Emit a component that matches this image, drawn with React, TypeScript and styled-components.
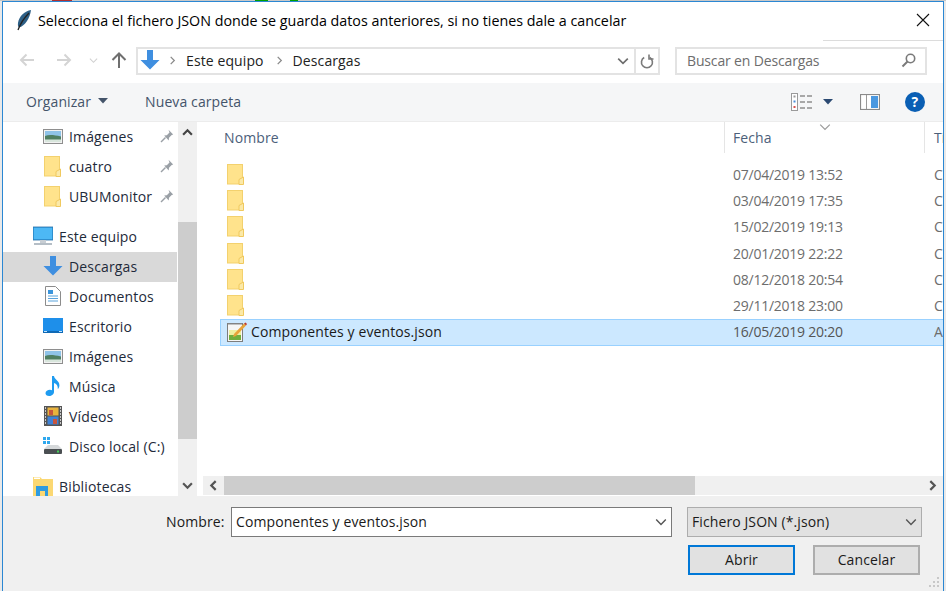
import React from "react";
import styled, { createGlobalStyle } from "styled-components";

const Global = createGlobalStyle`
  html, body { margin: 0; padding: 0; }
  body {
    width: 946px; height: 591px; overflow: hidden; background: #e9e9e9;
    font-family: "Open Sans", "Noto Sans", "Liberation Sans", sans-serif;
    font-size: 14px; color: #1a1a1a; letter-spacing: 0.1px;
  }
  * { box-sizing: border-box; }
`;

const TopStrip = styled.div`
  height: 1px;
  background: linear-gradient(90deg, #c8c8c8 0 52px, #b03030 52px 72px, #c8c8c8 72px 255px, #00a000 255px 268px, #c8c8c8 268px 290px, #00a000 290px 298px, #c8c8c8 298px 946px);
`;
const Win = styled.div`
  margin-left: 2px; width: 942px; height: 590px;
  border: 1px solid #2b87d3; border-width: 1px 1px 0 1px;
  background: #fff; display: flex; flex-direction: column; overflow: hidden;
`;
const TitleBar = styled.div`
  position: relative; height: 38px; flex: none; display: flex; align-items: center; padding: 0 0 2px 13px; gap: 6px; color: #000; font-size: 14.3px; letter-spacing: 0;
  &::after { content: ""; position: absolute; right: 0; bottom: -1px; width: 120px; height: 1px; background: #dcdcdc; }
`;
const Close = styled.span`
  margin-left: auto; margin-right: 13px; display: flex;
`;
const NavBar = styled.div`
  height: 43px; flex: none; display: flex; align-items: flex-start; padding: 7px 0 0 13px;
`;
const NavBtn = styled.span<{ $w: number; $ml?: number }>`
  width: ${p => p.$w}px; height: 26px; margin-left: ${p => p.$ml ?? 0}px; display: flex; align-items: center; justify-content: center;
`;
const AddressBox = styled.div`
  width: 524px; height: 28px; margin-left: 5px; border: 2px solid #e3e3e3; display: flex; align-items: center; color: #222; padding: 0 0 2px 2px;
`;
const Crumb = styled.span`
  display: inline-flex; align-items: center; margin-left: 8px; gap: 9px;
  & + & { margin-left: 11px; }
`;
const AddressEnd = styled.span`
  margin-left: auto; display: flex; align-items: center; height: 26px; margin-bottom: -2px;
`;
const RefreshCell = styled.span`
  width: 24px; height: 100%; border-left: 2px solid #e3e3e3; display: flex; align-items: center; justify-content: center; margin-left: 5px;
`;
const SearchBox = styled.div`
  width: 252px; height: 28px; margin-left: 15px; border: 2px solid #e3e3e3; display: flex; align-items: center; padding: 0 9px 2px 10px; color: #6d6d6d; letter-spacing: -0.15px;
  justify-content: space-between;
`;
const CommandBar = styled.div`
  height: 39px; flex: none; background: #f5f6f7; border-bottom: 1px solid #ececec; display: flex; align-items: center; padding-left: 23px; color: #44546a;
`;
const CmdItem = styled.span`
  display: inline-flex; align-items: center; gap: 7px; margin-right: 37px; padding-bottom: 2px;
`;
const CmdRight = styled.span`
  margin-left: auto; display: flex; align-items: center; margin-right: 18px; gap: 0;
`;
const CmdGap = styled.span<{ $w: number }>`
  width: ${p => p.$w}px; flex: none;
`;
const Main = styled.div`
  height: 374px; flex: none; display: flex; overflow: hidden;
`;
const Tree = styled.div`
  width: 175px; flex: none; display: flex; flex-direction: column; overflow: hidden; letter-spacing: 0.15px;
`;
const TreeItem = styled.div<{ $level: number; $active?: boolean; $gap?: boolean }>`
  height: 30px; flex: none; display: flex; align-items: center; padding: 0 0 2px ${p => (p.$level ? 40 : 30)}px;
  margin-right: 1px;
  margin-top: ${p => (p.$gap ? 10 : 0)}px; background: ${p => (p.$active ? "#d9d9d9" : "transparent")}; color: #1e2a3a;
`;
const TreeIcon = styled.span`
  width: 20px; height: 20px; flex: none; display: flex; align-items: center; justify-content: center; margin-right: 6px;
`;
const Pin = styled.span`
  margin-left: auto; margin-right: 3px; display: flex;
`;
const VScroll = styled.div`
  width: 19px; flex: none; background: #f0f0f0; display: flex; flex-direction: column;
`;
const Arrow = styled.span<{ $h: number; $w: number }>`
  height: ${p => p.$h}px; width: ${p => p.$w}px; flex: none; display: flex; align-items: center; justify-content: center;
`;
const VThumb = styled.div`
  width: 19px; height: 217px; margin-top: 79px; background: #cdcdcd; flex: none;
`;
const VEnd = styled.div`
  margin-top: auto; flex: none; height: 21px;
`;
const Gutter = styled.div`
  width: 6px; flex: none;
`;
const List = styled.div`
  flex: 1; min-width: 0; display: flex; flex-direction: column; position: relative;
`;
const Header = styled.div`
  height: 31px; flex: none; display: flex; color: #4c607a;
`;
const HCol = styled.div<{ $w?: number; $pad: number; $rule?: boolean }>`
  width: ${p => (p.$w ? `${p.$w}px` : "auto")}; flex: ${p => (p.$w ? "none" : 1)}; padding-left: ${p => p.$pad}px; line-height: 32px;
  border-right: ${p => (p.$rule ? "1px solid #e5e5e5" : "none")};
  overflow: hidden; white-space: nowrap;
`;
const Sort = styled.span`
  position: absolute; left: 616px; top: -1px; display: flex;
`;
const Rows = styled.div`
  flex: 1; padding-top: 8px; overflow: hidden;
`;
const Row = styled.div<{ $sel?: boolean }>`
  height: ${p => (p.$sel ? "27px" : "26.33px")}; display: flex; align-items: center; margin-left: 17px;
  padding-bottom: ${p => (p.$sel ? 1 : 0)}px;
  background: ${p => (p.$sel ? "#cce8ff" : "transparent")};
  border: 1px solid ${p => (p.$sel ? "#99d1ff" : "transparent")};
  border-right: none; white-space: nowrap;
`;
const RowName = styled.div`
  width: 512px; flex: none; display: flex; align-items: center; padding-left: 6px; gap: 4px; color: #1a1a1a;
`;
const RowDate = styled.div<{ $sel?: boolean }>`
  width: 201px; flex: none; letter-spacing: -0.25px; color: ${p => (p.$sel ? "#555" : "#6d6d6d")};
`;
const RowType = styled.div`
  flex: 1; overflow: hidden; color: #6d6d6d;
`;
const HScroll = styled.div`
  height: 19px; flex: none; margin-bottom: 1px; background: #f0f0f0; display: flex; align-items: center; justify-content: space-between;
`;
const HThumb = styled.div`
  width: 471px; height: 19px; background: #cdcdcd; margin-right: auto;
`;
const Footer = styled.div`
  flex: 1; background: #f0f0f0; padding-top: 11px; position: relative;
`;
const FieldRow = styled.div`
  display: flex; align-items: center; padding-left: 163px; color: #1a1a1a;
`;
const Label = styled.span`
  width: 65px; flex: none; padding-bottom: 2px;
`;
const Input = styled.div`
  width: 441px; height: 30px; flex: none; background: #fff; border: 1px solid #7a7a7a; display: flex; align-items: center; justify-content: space-between; padding: 0 4px 1px; color: #1a1a1a;
`;
const TypeSelect = styled.div`
  width: 235px; height: 30px; flex: none; margin-left: 15px; background: #e1e1e1; border: 1px solid #adadad; display: flex; align-items: center; justify-content: space-between; padding: 0 4px 1px; color: #1a1a1a;
`;
const ButtonRow = styled.div`
  display: flex; gap: 18px; padding: 8px 0 0 685px;
`;
const Btn = styled.div<{ $primary?: boolean }>`
  width: 107px; height: 30px; background: #e1e1e1; border: 2px solid ${p => (p.$primary ? "#0078d7" : "#adadad")};
  display: flex; align-items: center; justify-content: center; color: #1a1a1a; padding-bottom: 2px;
`;
const Grip = styled.span`
  position: absolute; right: 3px; bottom: 3px; display: flex;
`;

const Folder = () => (
  <svg width="18" height="21" viewBox="0 0 18 21">
    <rect x="0.5" y="0.5" width="15" height="19.500" fill="#ffe38c" stroke="#f3d16e" />
    <path d="M16.500 13v7.500h-4.500v-5z" fill="#fbe9a8" stroke="#f0c95e" />
  </svg>
);
const ImgIcon = () => (
  <svg width="20" height="15" viewBox="0 0 20 15">
    <rect x="0.5" y="0.5" width="19" height="14" fill="#f2f2f2" stroke="#8e8e8e" />
    <rect x="2" y="2" width="16" height="11" fill="#8fc3e8" />
    <path d="M2 7c4-1.500 9-1 16 .5V11H2z" fill="#4f7f62" />
    <rect x="2" y="10.500" width="16" height="2.500" fill="#d8e6dc" />
  </svg>
);
const PinIcon = () => (
  <svg width="14" height="14" viewBox="0 0 14 14">
    <path d="M8.5 0.8l4.700 4.700-1.500.6-2.700 2.700-.3 2.600L4.200 6.500l2.600-.3 2.700-2.700z" fill="#9aa0a6" />
    <path d="M5.5 8.500L1 13" stroke="#9aa0a6" strokeWidth="1.500" />
  </svg>
);
const DownArrow = () => (
  <svg width="20" height="20" viewBox="0 0 20 20">
    <path d="M7 0h6v10h6.500L10 19.500.5 10H7z" fill="#3f8fe0" />
  </svg>
);
const PcIcon = () => (
  <svg width="20" height="20" viewBox="0 0 20 20">
    <rect x="0" y="1" width="20" height="13" fill="#35a5ec" stroke="#2a6fa5" strokeWidth="0.800" />
    <rect x="1" y="2" width="18" height="11" fill="#4db8f5" />
    <rect x="7" y="14" width="6" height="3" fill="#c8ced4" />
    <rect x="1" y="17" width="18" height="2" fill="#b5bec6" />
  </svg>
);
const DocIcon = () => (
  <svg width="16" height="20" viewBox="0 0 16 20">
    <path d="M.5.500h10l5 5v14H.5z" fill="#fff" stroke="#8c8c8c" />
    <rect x="3" y="4" width="5" height="4" fill="#3b95dc" />
    <path d="M3 10h10M3 12.500h10M3 15h10" stroke="#5aa4dc" strokeWidth="1.200" />
  </svg>
);
const DesktopIcon = () => (
  <svg width="20" height="16" viewBox="0 0 20 16">
    <rect width="20" height="15" fill="#1e8fea" />
    <rect y="13" width="20" height="2" fill="#0f69b5" />
    <rect x="1" y="13" width="3" height="1" fill="#bfe3ff" />
    <rect x="16" y="13" width="3" height="1" fill="#bfe3ff" />
  </svg>
);
const MusicIcon = () => (
  <svg width="16" height="20" viewBox="0 0 16 20">
    <path d="M7 0h2c.3 3.400 5.400 4.600 5.400 9.200 0 1.700-.6 3-1.600 3.900.4-3.400-1.400-5.500-3.800-6.200V16c0 2.300-2.300 4-4.800 4C1.800 20 .5 18.900.5 17.300c0-2 2.200-3.500 4.500-3.500.8 0 1.500.2 2 .5z" fill="#1e9bf0" />
  </svg>
);
const VideoIcon = () => (
  <svg width="18" height="20" viewBox="0 0 18 20">
    <rect width="18" height="20" fill="#555" />
    <rect x="3.500" y="1.500" width="11" height="8" fill="#e8b33e" />
    <rect x="3.500" y="10.500" width="11" height="8" fill="#3f82d6" />
    <rect x="5" y="4" width="4" height="5" fill="#c8553d" />
    <rect x="9" y="13" width="4" height="5" fill="#c8553d" />
    <path d="M1 2h1M1 5h1M1 8h1M1 11h1M1 14h1M1 17h1M16 2h1M16 5h1M16 8h1M16 11h1M16 14h1M16 17h1" stroke="#eee" strokeWidth="1.400" />
  </svg>
);
const DiskIcon = () => (
  <svg width="20" height="18" viewBox="0 0 20 18">
    <rect x="0" y="0" width="3" height="3" fill="#2fa8ee" />
    <rect x="4" y="0" width="3" height="3" fill="#2fa8ee" />
    <rect x="0" y="4" width="3" height="3" fill="#2fa8ee" />
    <rect x="4" y="4" width="3" height="3" fill="#2fa8ee" />
    <path d="M5 8h10l4 4H1z" fill="#d5d8da" />
    <rect x="1" y="12" width="18" height="5" rx="1" fill="#4a4f52" />
    <rect x="14" y="13.500" width="2" height="2" fill="#46d05a" />
  </svg>
);
const LibIcon = () => (
  <svg width="20" height="20" viewBox="0 0 20 20">
    <path d="M0 1h7l2 2h11v17H0z" fill="#fbd873" />
    <rect x="1" y="1.500" width="6" height="1.500" fill="#fff" />
    <path d="M3 10h12v10h-3v-5H7v5H3z" fill="#2f9be0" />
  </svg>
);
const NoteIcon = () => (
  <svg width="20" height="20" viewBox="0 0 20 20">
    <rect x="0.500" y="1.500" width="15" height="18" fill="#f6f6f6" stroke="#7d7d7d" />
    <path d="M2 1v2M4 1v2M6 1v2M8 1v2M10 1v2M12 1v2M14 1v2" stroke="#8a8a8a" />
    <rect x="2" y="8" width="12" height="5" fill="#eef0a0" />
    <rect x="2" y="13" width="12" height="5" fill="#6fae3c" />
    <path d="M6 15l1-3L17 1.500l2 2L9 14z" fill="#e8a33a" />
    <path d="M17 1.500l2 2 1-1.500-1.500-1.500z" fill="#c0392b" />
  </svg>
);
const Chevron = ({ dir = "down", c = "#6e6e6e", s = 10, w = 1.2 }: { dir?: "down" | "up" | "left" | "right"; c?: string; s?: number; w?: number }) => {
  const d = { down: "M1 3l4 4 4-4", up: "M1 7l4-4 4 4", left: "M7 1L3 5l4 4", right: "M3 1l4 4-4 4" }[dir];
  return (
    <svg width={s} height={s} viewBox="0 0 10 10"><path d={d} fill="none" stroke={c} strokeWidth={w} /></svg>
  );
};
const Caret = ({ c }: { c: string }) => (
  <svg width="10" height="6" viewBox="0 0 10 6"><path d="M0 0h10L5 5.500z" fill={c} /></svg>
);
const NavArrow = ({ c, flip, w = 2 }: { c: string; flip?: boolean; w?: number }) => (
  <svg width="16" height="14" viewBox="0 0 16 14" style={flip ? { transform: "scaleX(-1)" } : undefined}>
    <path d="M15 7H2M7.500 1.500L2 7l5.500 5.500" fill="none" stroke={c} strokeWidth={w} />
  </svg>
);

const tree = [
  { t: "Imágenes", l: 1, i: <ImgIcon />, pin: true },
  { t: "cuatro", l: 1, i: <Folder />, pin: true },
  { t: "UBUMonitor", l: 1, i: <Folder />, pin: true },
  { t: "Este equipo", l: 0, i: <PcIcon />, gap: true },
  { t: "Descargas", l: 1, i: <DownArrow />, active: true },
  { t: "Documentos", l: 1, i: <DocIcon /> },
  { t: "Escritorio", l: 1, i: <DesktopIcon /> },
  { t: "Imágenes", l: 1, i: <ImgIcon /> },
  { t: "Música", l: 1, i: <MusicIcon /> },
  { t: "Vídeos", l: 1, i: <VideoIcon /> },
  { t: "Disco local (C:)", l: 1, i: <DiskIcon /> },
  { t: "Bibliotecas", l: 0, i: <LibIcon />, gap: true },
];
const dates = ["07/04/2019 13:52", "03/04/2019 17:35", "15/02/2019 19:13", "20/01/2019 22:22", "08/12/2018 20:54", "29/11/2018 23:00"];

export default function App() {
  return (
    <>
      <Global />
      <TopStrip />
      <Win>
        <TitleBar>
          <svg width="16" height="21" viewBox="0 0 16 21">
            <path d="M15 0C9 1 3 6 2 13c-.3 2 0 3.500 1 4.500C9 16 14 8 15 0z" fill="#2d5f86" />
            <path d="M13 3C9 7 5 12 2 20" stroke="#222" strokeWidth="1.300" fill="none" />
          </svg>
          Selecciona el fichero JSON donde se guarda datos anteriores, si no tienes dale a cancelar
          <Close>
            <svg width="14" height="14" viewBox="0 0 14 14"><path d="M1 1l12 12M13 1L1 13" stroke="#111" strokeWidth="1.100" /></svg>
          </Close>
        </TitleBar>
        <NavBar>
          <NavBtn $w={22}><NavArrow c="#d4d4d4" /></NavBtn>
          <NavBtn $w={30} $ml={11}><NavArrow c="#d4d4d4" flip /></NavBtn>
          <NavBtn $w={28}><Chevron c="#d0d0d0" s={9} /></NavBtn>
          <NavBtn $w={24}>
            <svg width="16" height="17" viewBox="0 0 16 17"><path d="M8 16V2M1.500 8L8 1.500 14.500 8" fill="none" stroke="#6f6f6f" strokeWidth="2" /></svg>
          </NavBtn>
          <AddressBox>
            <DownArrow />
            <Crumb><Chevron dir="right" c="#8a8a8a" s={9} w={1.400} />Este equipo</Crumb>
            <Crumb><Chevron dir="right" c="#8a8a8a" s={9} w={1.400} />Descargas</Crumb>
            <AddressEnd>
              <Chevron c="#6e6e6e" s={12} w={1.400} />
              <RefreshCell>
                <svg width="14" height="15" viewBox="0 0 14 15">
                  <path d="M4.200 3.500a5.500 5.500 0 1 0 5.500 0" fill="none" stroke="#7a7a7a" strokeWidth="1.600" />
                  <path d="M9 .5v4.500h4.500" fill="none" stroke="#7a7a7a" strokeWidth="1.600" />
                </svg>
              </RefreshCell>
            </AddressEnd>
          </AddressBox>
          <SearchBox>
            Buscar en Descargas
            <svg width="15" height="15" viewBox="0 0 15 15">
              <circle cx="9.500" cy="5.500" r="4.200" fill="none" stroke="#7a7a7a" strokeWidth="1.600" />
              <path d="M6.500 8.500L1.500 13.500" stroke="#7a7a7a" strokeWidth="2" />
            </svg>
          </SearchBox>
        </NavBar>
        <CommandBar>
          <CmdItem>Organizar <Caret c="#44546a" /></CmdItem>
          <CmdItem>Nueva carpeta</CmdItem>
          <CmdRight>
            <svg width="21" height="18" viewBox="0 0 21 18">
              <rect x="0.500" y="0.500" width="6" height="17" fill="#fff" stroke="#9a9a9a" />
              <rect x="2.500" y="2.500" width="2" height="2" fill="#999" />
              <rect x="2.500" y="7.500" width="2" height="2" fill="#4a90d9" />
              <rect x="2.500" y="13" width="2" height="2" fill="#d9534f" />
              <path d="M9 3h5M16 3h5M9 9h5M16 9h5M9 15h5M16 15h5" stroke="#8f8f8f" strokeWidth="1.300" />
            </svg>
            <CmdGap $w={11} />
            <Caret c="#2b4a72" />
            <CmdGap $w={27} />
            <svg width="20" height="16" viewBox="0 0 20 16">
              <rect x="0.500" y="0.500" width="19" height="15" fill="#fff" stroke="#8a8a8a" strokeWidth="1.200" />
              <rect x="11" y="2" width="7" height="12" fill="#4a98e0" />
              <rect x="6" y="1" width="1" height="14" fill="#9a9a9a" />
            </svg>
            <CmdGap $w={25} />
            <svg width="20" height="20" viewBox="0 0 20 20">
              <circle cx="10" cy="10" r="10" fill="#0a5fb4" />
              <text x="10" y="15" textAnchor="middle" fontSize="14" fontWeight="700" fill="#fff" fontFamily="Open Sans, sans-serif">?</text>
            </svg>
          </CmdRight>
        </CommandBar>
        <Main>
          <Tree>
            {tree.map((it, i) => (
              <TreeItem key={i} $level={it.l} $active={it.active} $gap={it.gap}>
                <TreeIcon>{it.i}</TreeIcon>
                {it.t}
                {it.pin && <Pin><PinIcon /></Pin>}
              </TreeItem>
            ))}
          </Tree>
          <VScroll>
            <Arrow $h={21} $w={19}><Chevron dir="up" c="#444" s={11} w={2} /></Arrow>
            <VThumb />
            <VEnd><Arrow $h={21} $w={19}><Chevron c="#555" s={11} w={2} /></Arrow></VEnd>
          </VScroll>
          <Gutter />
          <List>
            <Header>
              <HCol $w={522} $pad={21} $rule>Nombre</HCol>
              <HCol $w={200} $pad={8} $rule>Fecha</HCol>
              <HCol $pad={9}>Tipo</HCol>
              <Sort><Chevron c="#9a9a9a" s={12} w={1} /></Sort>
            </Header>
            <Rows>
              {dates.map(d => (
                <Row key={d}>
                  <RowName><Folder /></RowName>
                  <RowDate>{d}</RowDate>
                  <RowType>Carpeta de archivos</RowType>
                </Row>
              ))}
              <Row $sel>
                <RowName><NoteIcon />Componentes y eventos.json</RowName>
                <RowDate $sel>16/05/2019 20:20</RowDate>
                <RowType>Archivo JSON</RowType>
              </Row>
            </Rows>
            <HScroll>
              <Arrow $h={19} $w={21}><Chevron dir="left" c="#555" s={11} w={2} /></Arrow>
              <HThumb />
              <Arrow $h={19} $w={21}><Chevron dir="right" c="#555" s={11} w={2} /></Arrow>
            </HScroll>
          </List>
        </Main>
        <Footer>
          <FieldRow>
            <Label>Nombre:</Label>
            <Input>Componentes y eventos.json<Chevron c="#555" s={12} /></Input>
            <TypeSelect>Fichero JSON (*.json)<Chevron c="#555" s={12} /></TypeSelect>
          </FieldRow>
          <ButtonRow>
            <Btn $primary>Abrir</Btn>
            <Btn>Cancelar</Btn>
          </ButtonRow>
          <Grip>
            <svg width="11" height="11" viewBox="0 0 11 11">
              <path d="M8 0h2v2H8zM4 4h2v2H4zM8 4h2v2H8zM0 8h2v2H0zM4 8h2v2H4zM8 8h2v2H8z" fill="#c8c8c8" />
            </svg>
          </Grip>
        </Footer>
      </Win>
    </>
  );
}
